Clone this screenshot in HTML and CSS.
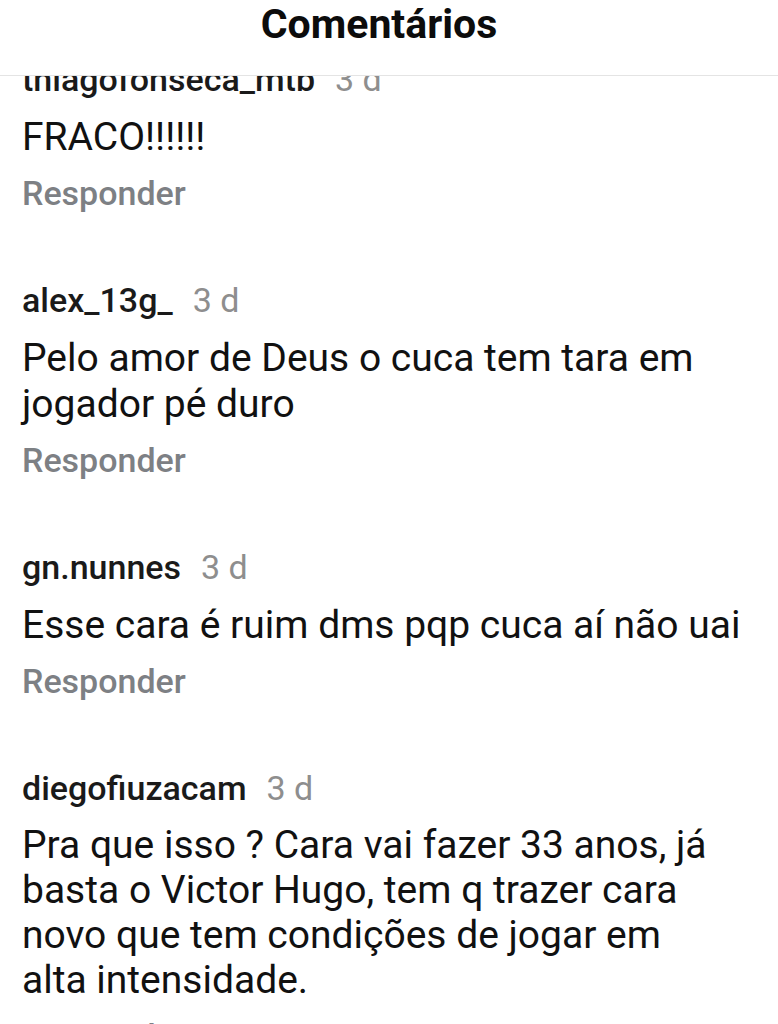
FILE: index.html
```html
<!DOCTYPE html>
<html lang="pt-BR">
<head>
    <meta charset="UTF-8">
    <meta name="viewport" content="width=device-width, initial-scale=1.0">
    <title>Comentários</title>
    <link rel="stylesheet" href="styles.css">
</head>
<body>
    <div class="screen">
        <header class="top-bar">
            <h1>Comentários</h1>
        </header>

        <div class="feed">
            <ul class="comments">
                <li class="comment">
                    <div class="meta"><span class="user">thiagofonseca_mtb</span><span class="time">3 d</span></div>
                    <p class="text">FRACO!!!!!!</p>
                    <a class="reply" href="#">Responder</a>
                </li>
                <li class="comment">
                    <div class="meta"><span class="user">alex_13g_</span><span class="time">3 d</span></div>
                    <p class="text">Pelo amor de Deus o cuca tem tara em jogador pé duro</p>
                    <a class="reply" href="#">Responder</a>
                </li>
                <li class="comment">
                    <div class="meta"><span class="user">gn.nunnes</span><span class="time">3 d</span></div>
                    <p class="text">Esse cara é ruim dms pqp cuca aí não uai</p>
                    <a class="reply" href="#">Responder</a>
                </li>
                <li class="comment">
                    <div class="meta"><span class="user">diegofiuzacam</span><span class="time">3 d</span></div>
                    <p class="text text-long">Pra que isso ? Cara vai fazer 33 anos, já basta o Victor Hugo, tem q trazer cara novo que tem condições de jogar em alta intensidade.</p>
                    <a class="reply" href="#">Responder</a>
                </li>
            </ul>
        </div>
    </div>
</body>
</html>
```

FILE: styles.css
```css
* {
    box-sizing: border-box;
}
body {
    margin: 0;
    background: #fff;
    color: #111;
    font-family: Roboto, "Liberation Sans", sans-serif;
}
.screen {
    width: 778px;
    height: 1024px;
    display: flex;
    flex-direction: column;
    overflow: hidden;
}
.top-bar {
    height: 76px;
    flex: none;
    padding-right: 20px;
    border-bottom: 1px solid #e4e4e4;
    text-align: center;
}
.top-bar h1 {
    margin: 0;
    font-size: 41px;
    line-height: 48px;
    font-weight: 700;
    color: #0c0c0c;
}
.feed {
    flex: 1;
    overflow: hidden;
}
.comments {
    list-style: none;
    margin: -17px 0 0;
    padding: 0 20px 0 22px;
    display: flex;
    flex-direction: column;
    gap: 67px;
}
.meta {
    display: flex;
    gap: 20px;
    font-size: 34px;
    line-height: 40px;
}
.user {
    font-weight: 500;
    color: #1a1a1a;
}
.time {
    color: #8e8e8e;
}
.text {
    margin: 15px 0 0;
    font-size: 39px;
    line-height: 46px;
    color: #111;
}
.text-long {
    max-width: 712px;
    line-height: 45px;
}
.reply {
    display: block;
    margin-top: 13px;
    font-size: 34px;
    line-height: 40px;
    font-weight: 500;
    color: #7d8084;
    text-decoration: none;
}
```
